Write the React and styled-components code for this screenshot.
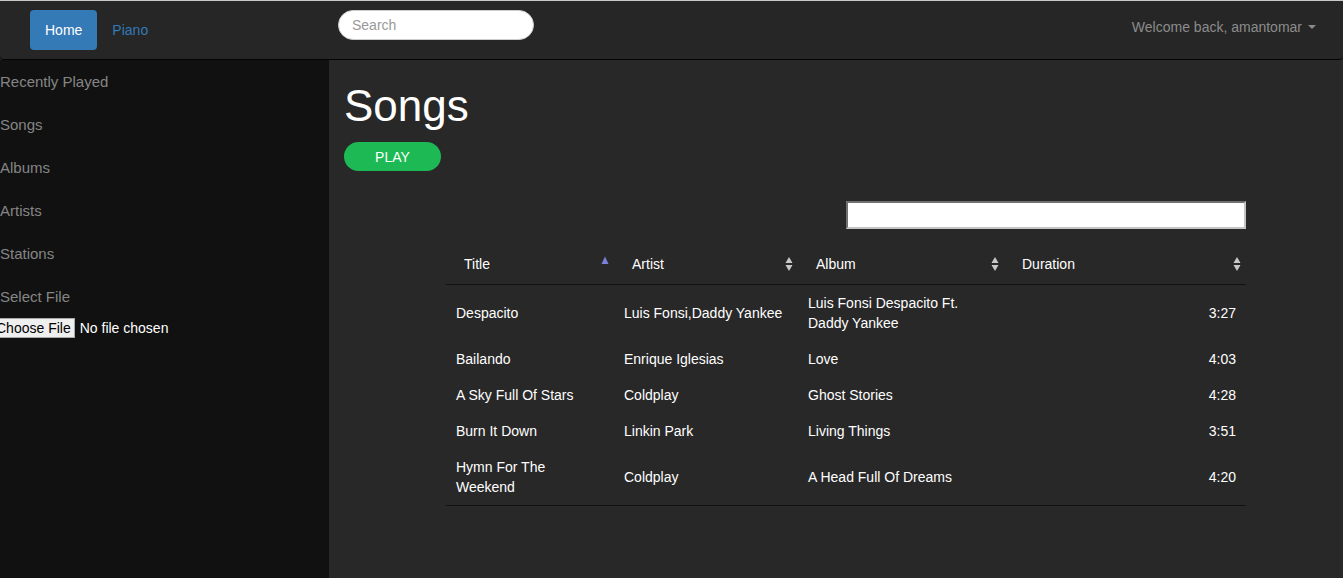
import React from "react";
import styled, { createGlobalStyle } from "styled-components";

const GlobalStyle = createGlobalStyle`
  html, body { margin: 0; padding: 0; }
  body {
    background: #282828;
    font-family: "Liberation Sans", Arial, Helvetica, sans-serif;
    font-size: 14px;
    line-height: 20px;
    color: #fff;
  }
  * { box-sizing: border-box; }
`;

const Page = styled.div`
  min-height: 100vh;
  display: flex;
  flex-direction: column;
`;

const NavBar = styled.header`
  display: flex;
  align-items: flex-start;
  height: 60px;
  background: #262626;
  border-top: 1px solid #c9c9c9;
  border-bottom: 1px solid #050505;
  border-radius: 0 0 4px 4px;
`;

const NavLeft = styled.nav`
  flex: 0 0 338px;
  display: flex;
  padding: 9px 0 0 30px;
`;

const NavLink = styled.a`
  display: block;
  padding: 10px 15px;
  line-height: 20px;
  font-size: 14px;
  text-decoration: none;
  border-radius: 4px;
  color: ${(p) => (p.$active ? "#fff" : "#337ab7")};
  background: ${(p) => (p.$active ? "#337ab7" : "transparent")};
`;

const SearchBox = styled.input`
  margin-top: 9px;
  width: 196px;
  height: 30px;
  border: 1px solid #ccc;
  border-radius: 15px;
  padding: 0 13px;
  font-family: inherit;
  font-size: 14px;
  color: #555;
  background: #fff;
  outline: none;
  &::placeholder { color: #999; }
`;

const Welcome = styled.div`
  margin-left: auto;
  padding: 16px 27px 0 0;
  color: #8c8c8c;
  font-size: 14px;
  line-height: 20px;
  display: flex;
  align-items: center;
`;

const Caret = styled.span`
  display: inline-block;
  width: 0;
  height: 0;
  margin-left: 6px;
  border-top: 4px solid #8c8c8c;
  border-left: 4px solid transparent;
  border-right: 4px solid transparent;
`;

const Body = styled.div`
  flex: 1;
  display: flex;
`;

const Sidebar = styled.aside`
  flex: 0 0 329px;
  background: #111111;
  display: flex;
  flex-direction: column;
  overflow: hidden;
`;

const SideItem = styled.a`
  display: block;
  padding: 11px 0;
  line-height: 21px;
  font-size: 15px;
  color: #858585;
  text-decoration: none;
`;

const SideLabel = styled.label`
  display: block;
  padding: 11px 0 11px;
  line-height: 21px;
  font-size: 15px;
  color: #858585;
`;

const FileInput = styled.input`
  margin-left: -8px;
  font-family: inherit;
  font-size: 14px;
  color: #fff;
  line-height: 16px;
  &::file-selector-button {
    font-family: inherit;
    font-size: 14px;
    line-height: 16px;
    padding: 1px 3px;
    margin-right: 5px;
    border: 1px solid #a9a9a9;
    border-radius: 0;
    background: #efefef;
    color: #000;
  }
`;

const Main = styled.main`
  flex: 1;
  background: #282828;
  padding: 0 15px;
`;

const Title = styled.h1`
  margin: 22px 0 0;
  font-size: 44px;
  line-height: 1.1;
  font-weight: 400;
  color: #fff;
`;

const PlayButton = styled.button`
  margin-top: 12px;
  width: 97px;
  height: 29px;
  border: none;
  border-radius: 15px;
  background: #1db954;
  color: #fff;
  font-family: inherit;
  font-size: 14px;
  line-height: 20px;
  padding: 0;
`;

const TableArea = styled.section`
  width: 800px;
  margin: 30px 0 0 102px;
`;

const FilterRow = styled.div`
  display: flex;
  justify-content: flex-end;
`;

const FilterInput = styled.input`
  width: 400px;
  height: 28px;
  border: 2px inset #c4c4c4;
  background: #fff;
  font-family: inherit;
  font-size: 14px;
  padding: 0 4px;
  outline: none;
`;

const Table = styled.table`
  margin-top: 15px;
  width: 100%;
  border-collapse: collapse;
  table-layout: fixed;
`;

const Th = styled.th`
  padding: 10px 5px 10px 18px;
  font-weight: 400;
  text-align: left;
  color: #fff;
  border-bottom: 1px solid #111;
  line-height: 20px;
`;

const ThInner = styled.div`
  display: flex;
  justify-content: space-between;
  align-items: center;
  height: 20px;
`;

const Row = styled.tr`
  &:last-child td { border-bottom: 1px solid #111; }
`;

const Td = styled.td`
  padding: 8px 10px;
  line-height: 20px;
  color: #fff;
  vertical-align: middle;
  text-align: ${(p) => (p.$right ? "right" : "left")};
`;

function SortIcon({ dir }) {
  if (dir === "asc") {
    return (
      <svg width="8" height="16" viewBox="0 0 8 16">
        <polygon points="4,0.5 7.5,8 0.5,8" fill="#7b80d8" />
      </svg>
    );
  }
  return (
    <svg width="8" height="16" viewBox="0 0 8 16">
      <polygon points="4,1 7.5,7 0.5,7" fill="#c8c8c8" />
      <polygon points="0.5,9 7.5,9 4,15" fill="#c8c8c8" />
    </svg>
  );
}

const songs = [
  ["Despacito", "Luis Fonsi,Daddy Yankee", "Luis Fonsi Despacito Ft. Daddy Yankee", "3:27"],
  ["Bailando", "Enrique Iglesias", "Love", "4:03"],
  ["A Sky Full Of Stars", "Coldplay", "Ghost Stories", "4:28"],
  ["Burn It Down", "Linkin Park", "Living Things", "3:51"],
  ["Hymn For The Weekend", "Coldplay", "A Head Full Of Dreams", "4:20"],
];

const columns = [
  { label: "Title", width: 168, dir: "asc" },
  { label: "Artist", width: 184 },
  { label: "Album", width: 206 },
  { label: "Duration", width: 242 },
];

export default function App() {
  return (
    <>
      <GlobalStyle />
      <Page>
        <NavBar>
          <NavLeft>
            <NavLink href="#" $active>Home</NavLink>
            <NavLink href="#">Piano</NavLink>
          </NavLeft>
          <SearchBox type="text" placeholder="Search" />
          <Welcome>
            Welcome back, amantomar <Caret />
          </Welcome>
        </NavBar>
        <Body>
          <Sidebar>
            <SideItem href="#">Recently Played</SideItem>
            <SideItem href="#">Songs</SideItem>
            <SideItem href="#">Albums</SideItem>
            <SideItem href="#">Artists</SideItem>
            <SideItem href="#">Stations</SideItem>
            <SideLabel>Select File</SideLabel>
            <div>
              <FileInput type="file" />
            </div>
          </Sidebar>
          <Main>
            <Title>Songs</Title>
            <PlayButton>PLAY</PlayButton>
            <TableArea>
              <FilterRow>
                <FilterInput type="search" />
              </FilterRow>
              <Table>
                <colgroup>
                  {columns.map((c) => (
                    <col key={c.label} style={{ width: c.width }} />
                  ))}
                </colgroup>
                <thead>
                  <tr>
                    {columns.map((c) => (
                      <Th key={c.label}>
                        <ThInner>
                          <span>{c.label}</span>
                          <SortIcon dir={c.dir} />
                        </ThInner>
                      </Th>
                    ))}
                  </tr>
                </thead>
                <tbody>
                  {songs.map((s) => (
                    <Row key={s[0]}>
                      <Td>{s[0]}</Td>
                      <Td>{s[1]}</Td>
                      <Td>{s[2]}</Td>
                      <Td $right>{s[3]}</Td>
                    </Row>
                  ))}
                </tbody>
              </Table>
            </TableArea>
          </Main>
        </Body>
      </Page>
    </>
  );
}
